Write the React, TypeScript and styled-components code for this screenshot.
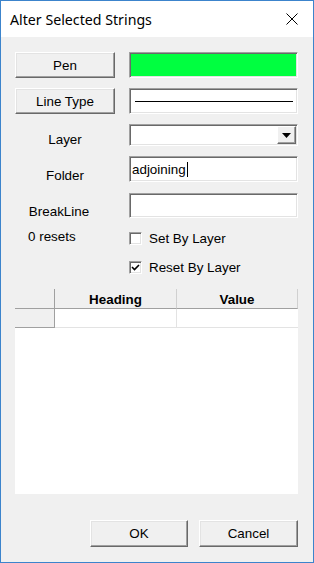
import React from 'react';
import styled, { createGlobalStyle } from 'styled-components';

const GlobalStyle = createGlobalStyle`
  html, body { margin: 0; padding: 0; background: #f0f0f0; }
  * { box-sizing: border-box; }
`;

const Window = styled.div`
  width: 314px;
  height: 563px;
  border: 1px solid #3c84cc;
  background: #f0f0f0;
  display: flex;
  flex-direction: column;
  font-family: "Liberation Sans", Arial, sans-serif;
  font-size: 13.4px;
  color: #000;
`;

const TitleBar = styled.div`
  height: 36px;
  background: #fff;
  display: flex;
  align-items: center;
  justify-content: space-between;
  padding: 0 15px 0 9px;
`;

const Title = styled.span`
  font-family: "Noto Sans", "Open Sans", sans-serif;
  font-size: 14.2px;
  color: #000;
`;

const Body = styled.div`
  flex: 1;
  display: flex;
  flex-direction: column;
  padding: 15px 15px 15px 14px;
`;

const Row = styled.div<{ $gap?: number; $h: number }>`
  display: flex;
  gap: 14px;
  height: ${p => p.$h}px;
  margin-top: ${p => p.$gap ?? 0}px;
`;

const LeftCell = styled.div`
  width: 100px;
  flex: none;
  display: flex;
`;

const RightCell = styled.div`
  flex: 1;
  display: flex;
`;

const Label = styled.span<{ $shift?: number }>`
  align-self: flex-end;
  width: 100%;
  text-align: center;
  margin-bottom: -1px;
  transform: translateX(${p => p.$shift ?? 0}px);
`;

const Button = styled.div<{ $w: number }>`
  width: ${p => p.$w}px;
  height: 100%;
  background: #f0f0f0;
  border: 1px solid;
  border-color: #fff #696969 #696969 #fff;
  box-shadow: inset -1px -1px #a0a0a0, inset 1px 1px #e3e3e3;
  display: flex;
  align-items: center;
  justify-content: center;
  cursor: default;
  user-select: none;
`;

const Sunken = styled.div<{ $bg?: string }>`
  flex: 1;
  height: 100%;
  background: ${p => p.$bg ?? '#fff'};
  border: 1px solid;
  border-color: #a0a0a0 #fff #fff #a0a0a0;
  box-shadow: inset 1px 1px #696969, inset -1px -1px #e3e3e3;
  display: flex;
  align-items: center;
  position: relative;
`;

const LineSample = styled.div`
  flex: 1;
  height: 1px;
  background: #000;
  margin: 0 4px 0 5px;
`;

const InputText = styled.span`
  padding-left: 2px;
  display: flex;
  align-items: center;
`;

const Caret = styled.span`
  display: inline-block;
  width: 1px;
  height: 15px;
  background: #000;
  margin-left: 1px;
`;

const DropButton = styled.div`
  position: absolute;
  right: 1px;
  top: 1px;
  bottom: 1px;
  width: 19px;
  background: #f0f0f0;
  border: 1px solid;
  border-color: #fff #696969 #696969 #fff;
  box-shadow: inset -1px -1px #a0a0a0;
  display: flex;
  align-items: center;
  justify-content: center;
`;

const CheckRow = styled.div<{ $gap?: number }>`
  display: flex;
  align-items: center;
  gap: 14px;
  margin-top: ${p => p.$gap ?? 0}px;
  height: 14px;
`;

const ResetsText = styled.span`
  width: 100px;
  padding-left: 13px;
  margin-top: -4px;
`;

const Check = styled.label`
  display: flex;
  align-items: center;
  gap: 7px;
`;

const Box = styled.span`
  width: 13px;
  height: 13px;
  background: #fff;
  border: 1px solid;
  border-color: #a0a0a0 #fff #fff #a0a0a0;
  box-shadow: inset 1px 1px #696969, inset -1px -1px #e3e3e3;
  display: flex;
  align-items: center;
  justify-content: center;
`;

const Grid = styled.div`
  margin-top: 15px;
  height: 205px;
  background: #fff;
  display: grid;
  grid-template-columns: 40px 122px 1fr;
  grid-template-rows: 20px 19px;
  align-content: start;
`;

const HeadCell = styled.div<{ $rowHead?: boolean }>`
  background: #f0f0f0;
  border-right: 1px solid ${p => (p.$rowHead ? '#a0a0a0' : '#d0d0d0')};
  border-bottom: 1px solid #a0a0a0;
  font-weight: bold;
  display: flex;
  align-items: center;
  justify-content: center;
  padding-top: 1px;
`;

const Cell = styled.div<{ $last?: boolean }>`
  border-right: ${p => (p.$last ? 'none' : '1px solid #e3e3e3')};
  border-bottom: 1px solid #e3e3e3;
`;

const Footer = styled.div`
  margin-top: auto;
  display: flex;
  justify-content: flex-end;
  gap: 11px;
  height: 27px;
`;

const CloseIcon = () => (
  <svg width="12" height="12" viewBox="0 0 12 12">
    <path d="M0.5 0.5 L11.5 11.5 M11.5 0.5 L0.5 11.5" stroke="#000" strokeWidth="1" />
  </svg>
);

const Arrow = () => (
  <svg width="9" height="5" viewBox="0 0 9 5">
    <path d="M0 0 H9 L4.5 5 Z" fill="#000" />
  </svg>
);

const Tick = () => (
  <svg width="9" height="9" viewBox="0 0 9 9">
    <path d="M1 4 L3.5 6.5 L8 2" stroke="#000" strokeWidth="1.6" fill="none" />
  </svg>
);

export default function App() {
  return (
    <>
      <GlobalStyle />
      <Window>
        <TitleBar>
          <Title>Alter Selected Strings</Title>
          <CloseIcon />
        </TitleBar>
        <Body>
          <Row $h={26}>
            <LeftCell><Button $w={100}>Pen</Button></LeftCell>
            <RightCell><Sunken $bg="#00ff40" /></RightCell>
          </Row>
          <Row $h={26} $gap={10}>
            <LeftCell><Button $w={100}>Line Type</Button></LeftCell>
            <RightCell><Sunken><LineSample /></Sunken></RightCell>
          </Row>
          <Row $h={22} $gap={10}>
            <LeftCell><Label>Layer</Label></LeftCell>
            <RightCell>
              <Sunken><DropButton><Arrow /></DropButton></Sunken>
            </RightCell>
          </Row>
          <Row $h={26} $gap={10}>
            <LeftCell><Label>Folder</Label></LeftCell>
            <RightCell>
              <Sunken><InputText>adjoining<Caret /></InputText></Sunken>
            </RightCell>
          </Row>
          <Row $h={25} $gap={11}>
            <LeftCell><Label $shift={-6}>BreakLine</Label></LeftCell>
            <RightCell><Sunken /></RightCell>
          </Row>
          <CheckRow $gap={13}>
            <ResetsText>0 resets</ResetsText>
            <Check><Box />Set By Layer</Check>
          </CheckRow>
          <CheckRow $gap={15}>
            <ResetsText />
            <Check><Box><Tick /></Box>Reset By Layer</Check>
          </CheckRow>
          <Grid>
            <HeadCell $rowHead />
            <HeadCell>Heading</HeadCell>
            <HeadCell>Value</HeadCell>
            <HeadCell $rowHead />
            <Cell />
            <Cell $last />
          </Grid>
          <Footer>
            <Button $w={98}>OK</Button>
            <Button $w={99}>Cancel</Button>
          </Footer>
        </Body>
      </Window>
    </>
  );
}
